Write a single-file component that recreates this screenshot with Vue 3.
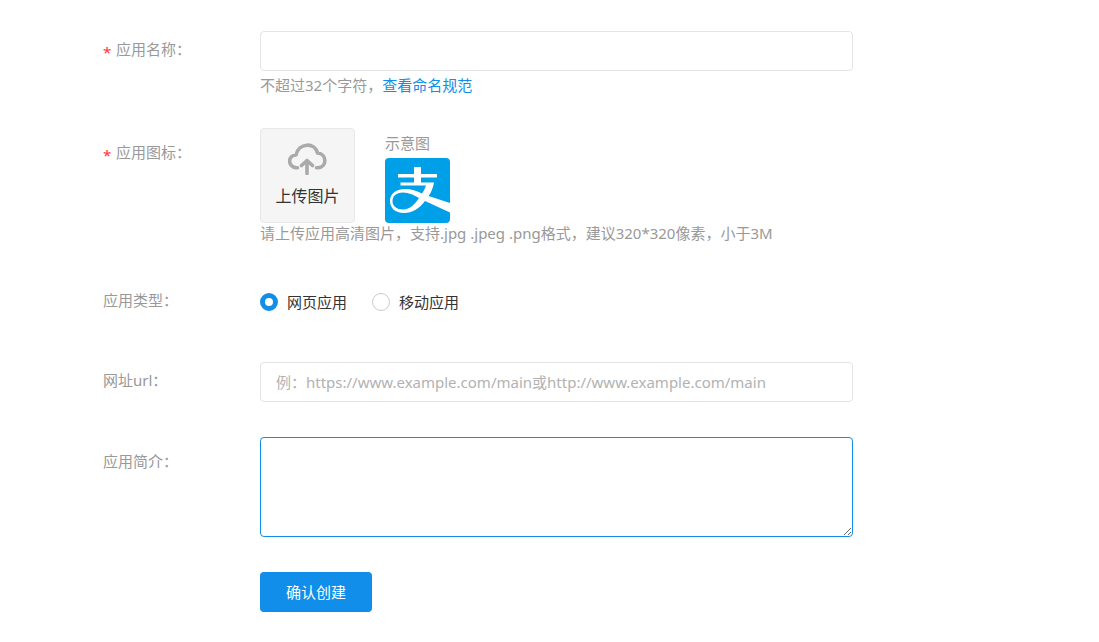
<script setup>
import { ref } from 'vue'

const name = ref('')
const type = ref('web')
const url = ref('')
const intro = ref('')
</script>

<template>
  <form class="form" @submit.prevent>
    <div class="row">
      <label class="label" for="app-name"><span class="star">*</span>应用名称：</label>
      <div class="field">
        <input id="app-name" v-model="name" class="input" type="text" />
        <p class="hint tall">不超过32个字符，<a class="link" href="#">查看命名规范</a></p>
      </div>
    </div>

    <div class="row icon-row">
      <div id="icon-label" class="label low"><span class="star">*</span>应用图标：</div>
      <div class="field">
        <div class="pictures">
          <button class="upload" type="button" aria-describedby="icon-label">
            <svg width="40" height="32" viewBox="0 0 40 32" fill="none" stroke="#aaa" stroke-width="3.6" stroke-linecap="round" stroke-linejoin="round">
              <path d="M9.500 24.700 H8 C-0.500 23.500 -0.500 12.500 8 12 C10.500 -0.500 27 -1 29.500 10 C39.500 11 39 24 30 24.700 H28.500" />
              <path d="M19 30.500 V18.500 M13.500 22.500 L19 17.500 L24.500 22.500" />
            </svg>
            <span>上传图片</span>
          </button>
          <figure class="sample">
            <figcaption>示意图</figcaption>
            <svg class="logo" width="65" height="65" viewBox="0 0 65 65">
              <rect width="65" height="65" fill="#00a0e9" />
              <path fill="#fff" d="M29 9h7v7h16v3.500H36v5h13C48 30 46 35 43.500 38L65 45v9.500L40 43C34 51 27 55 19 55C10 55 5 50 5 43C5 35 12 31 20 31C26 31 32 33 37 35.500C39 33 40 30 41 27.500H15.500v-3H29v-5H13V16h16z" />
              <path fill="#00a0e9" d="M34 40C29 37 24 34.500 18 34.500C11 34.500 7.500 38.500 7.500 43C7.500 48.500 12 51.500 18 51.500C25 51.500 30 46 34 40z" />
            </svg>
          </figure>
        </div>
        <p class="hint">请上传应用高清图片，支持.jpg .jpeg .png格式，建议320*320像素，小于3M</p>
      </div>
    </div>

    <div class="row type-row">
      <div id="type-label" class="label">应用类型：</div>
      <div class="field radios" role="radiogroup" aria-labelledby="type-label">
        <label class="choice"><input v-model="type" class="radio" type="radio" name="type" value="web" />网页应用</label>
        <label class="choice"><input v-model="type" class="radio" type="radio" name="type" value="mobile" />移动应用</label>
      </div>
    </div>

    <div class="row url-row">
      <label class="label" for="app-url">网址url：</label>
      <div class="field">
        <input id="app-url" v-model="url" class="input" type="text" placeholder="例：https://www.example.com/main或http://www.example.com/main" />
      </div>
    </div>

    <div class="row intro-row">
      <label class="label low" for="app-intro">应用简介：</label>
      <div class="field">
        <textarea id="app-intro" v-model="intro" class="input area"></textarea>
        <button class="submit" type="submit">确认创建</button>
      </div>
    </div>
  </form>
</template>

<style>
body {
  margin: 0;
  background: #fff;
}
</style>

<style scoped>
.form {
  padding: 31px 246px 30px 103px;
  font-family: "Noto Sans", "Noto Sans CJK SC", sans-serif;
  font-size: 15px;
  line-height: 22px;
  color: #999;
}
.row {
  display: grid;
  grid-template-columns: 157px minmax(0, 1fr);
  align-items: start;
}
.icon-row { margin-top: 29px; }
.type-row { margin-top: 39px; }
.url-row { margin-top: 40px; }
.intro-row { margin-top: 35px; }
.label {
  display: flex;
  height: 36px;
  line-height: 36px;
}
.low { padding-top: 6px; }
.star {
  width: 13px;
  line-height: 42px;
  color: #f33;
}
.input {
  display: block;
  box-sizing: border-box;
  width: 100%;
  height: 40px;
  padding: 0 15px;
  border: 1px solid #e4e4e4;
  border-radius: 4px;
  background: #fff;
  font: inherit;
  color: #333;
  outline: none;
}
.input::placeholder {
  color: #b2b2b2;
  opacity: 1;
}
.area {
  height: 100px;
  padding: 10px 15px;
  border-color: #108ee9;
  resize: both;
}
.hint {
  margin: 0;
  line-height: 20px;
}
.tall { line-height: 28px; }
.link {
  color: #108ee9;
  text-decoration: none;
}
.pictures {
  display: flex;
  gap: 30px;
}
.upload {
  display: flex;
  flex-direction: column;
  align-items: center;
  box-sizing: border-box;
  width: 95px;
  height: 95px;
  padding: 14px 0 0;
  gap: 10px;
  border: 1px solid #e8e8e8;
  border-radius: 4px;
  background: #f5f5f5;
  font: inherit;
  font-size: 16px;
  color: #333;
}
.sample { margin: 0; }
.sample figcaption {
  height: 30px;
  line-height: 30px;
}
.logo {
  display: block;
  border-radius: 4px;
}
.radios {
  display: flex;
  gap: 25px;
  line-height: 40px;
  color: #333;
}
.choice {
  display: flex;
  align-items: center;
  gap: 9px;
}
.radio {
  appearance: none;
  box-sizing: border-box;
  width: 18px;
  height: 18px;
  margin: 0;
  border: 1px solid #ccc;
  border-radius: 50%;
  background: #fff;
}
.radio:checked { border: 5px solid #108ee9; }
.submit {
  display: block;
  width: 112px;
  height: 40px;
  margin-top: 35px;
  padding: 0;
  border: 0;
  border-radius: 4px;
  background: #108ee9;
  font: inherit;
  color: #fff;
}
</style>
